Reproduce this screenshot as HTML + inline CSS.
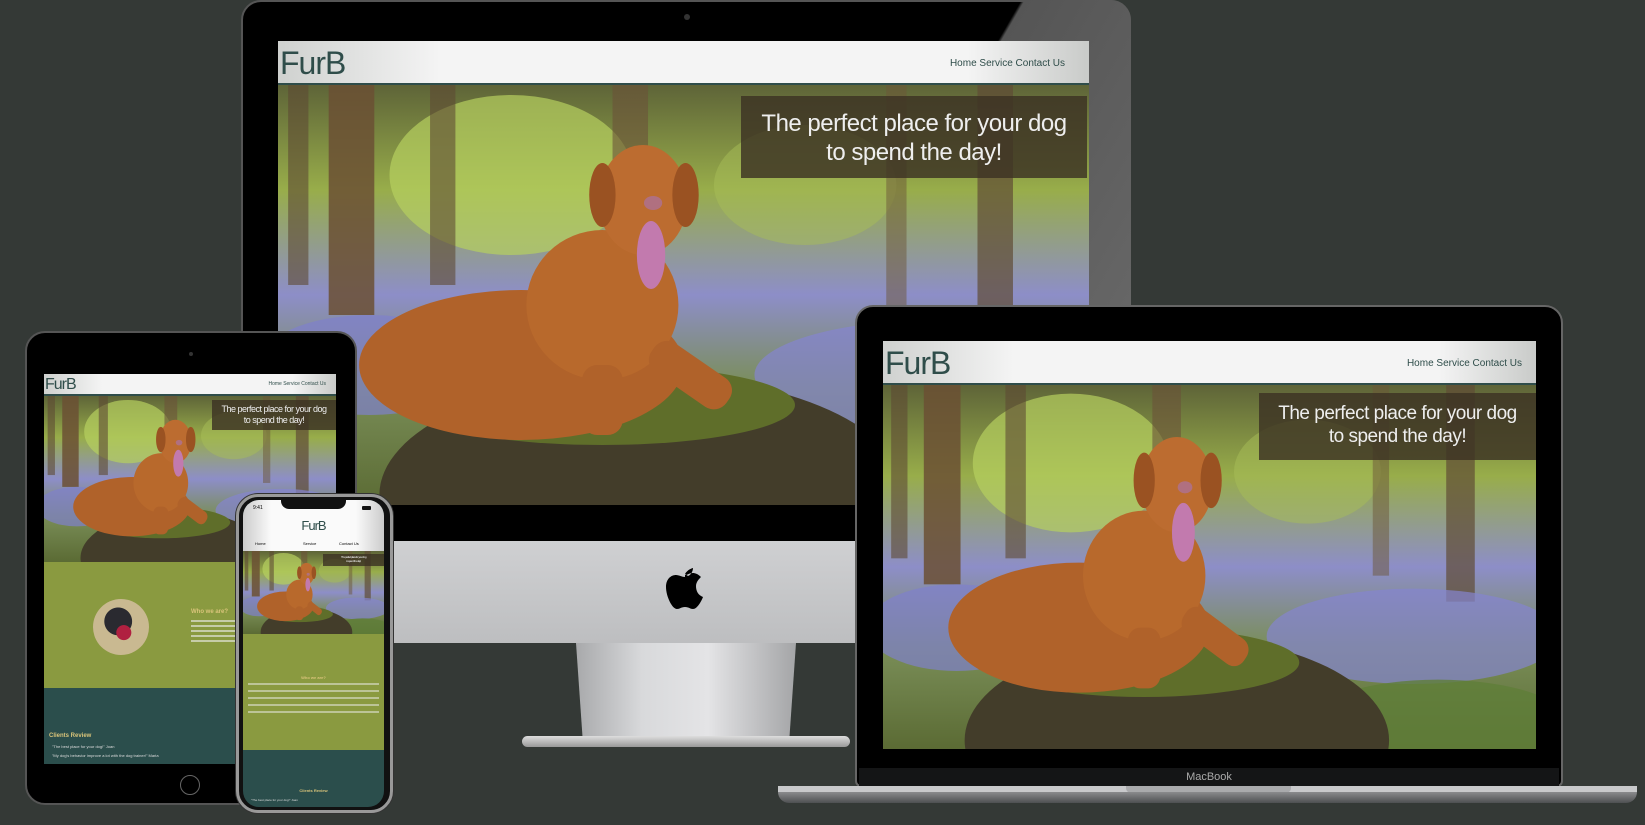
<!DOCTYPE html>
<html><head><meta charset="utf-8"><style>
*{margin:0;padding:0;box-sizing:border-box}
body{width:1645px;height:825px;background:#343936;position:relative;overflow:hidden;font-family:"Liberation Sans",sans-serif}
.a{position:absolute}
.hdr{background:linear-gradient(90deg,#cfd1cf 0%,#f4f4f4 20%,#f4f4f4 85%,#c9cbc9 100%);border-bottom:2px solid #2f4d4a;color:#2f4d4a}
.logo{font-weight:normal;letter-spacing:-1px}
.hero svg{width:100%;height:100%;display:block}
.tbox{background:rgba(60,50,35,.82);color:#eee;text-align:center;line-height:1.2;letter-spacing:-.5px}
</style></head><body>
<svg width="0" height="0" style="position:absolute">
<defs>
<linearGradient id="bg" x1="0" y1="0" x2="0" y2="1">
<stop offset="0" stop-color="#5e6438"/><stop offset=".25" stop-color="#98ad4a"/><stop offset=".5" stop-color="#8d8ec8"/><stop offset=".72" stop-color="#7a8e58"/><stop offset="1" stop-color="#5b6b34"/></linearGradient>
<symbol id="hero" viewBox="0 0 800 420" preserveAspectRatio="none">
<rect width="800" height="420" fill="url(#bg)"/>
<ellipse cx="230" cy="90" rx="120" ry="80" fill="#b7d060" opacity=".7"/>
<ellipse cx="520" cy="100" rx="90" ry="60" fill="#a8be58" opacity=".5"/>
<rect x="50" y="0" width="45" height="230" fill="#6b5034" opacity=".85"/>
<rect x="10" y="0" width="20" height="200" fill="#5e4a33" opacity=".6"/>
<rect x="150" y="0" width="25" height="200" fill="#5e4a33" opacity=".6"/>
<rect x="330" y="0" width="35" height="190" fill="#6a5238" opacity=".6"/>
<rect x="690" y="0" width="35" height="250" fill="#5f4b35" opacity=".7"/>
<rect x="600" y="0" width="20" height="220" fill="#6b5638" opacity=".5"/>
<ellipse cx="650" cy="290" rx="180" ry="55" fill="#8585d0" opacity=".7"/>
<ellipse cx="90" cy="280" rx="110" ry="50" fill="#7f80cc" opacity=".7"/>
<ellipse cx="680" cy="390" rx="160" ry="50" fill="#5f7e38" opacity=".8"/>
<ellipse cx="360" cy="410" rx="260" ry="120" fill="#433d2a"/>
<ellipse cx="320" cy="320" rx="190" ry="40" fill="#5f6e2a"/>
<ellipse cx="240" cy="280" rx="160" ry="75" fill="#b0622a"/>
<ellipse cx="320" cy="220" rx="75" ry="75" fill="#b8692c"/>
<rect x="300" y="280" width="40" height="70" rx="15" fill="#b0622a"/>
<rect x="380" y="250" width="90" height="35" rx="15" transform="rotate(35 380 250)" fill="#b0622a"/>
<ellipse cx="360" cy="115" rx="44" ry="55" fill="#bc6c30"/>
<ellipse cx="320" cy="110" rx="13" ry="32" fill="#9a5222"/>
<ellipse cx="402" cy="110" rx="13" ry="32" fill="#9a5222"/>
<ellipse cx="368" cy="170" rx="14" ry="34" fill="#c27aae"/>
<ellipse cx="370" cy="118" rx="9" ry="7" fill="#b07080"/>
</symbol>
</defs></svg>

<!-- iMac -->
<div class="a" style="left:241px;top:0;width:890px;height:545px;background:#000;border-radius:20px 20px 0 0;border:2px solid #555"></div>
<div class="a" style="left:950px;top:0;width:181px;height:305px;background:linear-gradient(120deg,transparent 20%,#555 21%,#666 100%);border-radius:0 20px 0 0"></div>
<div class="a" style="left:684px;top:14px;width:6px;height:6px;border-radius:50%;background:#333"></div>
<div class="a" style="left:241px;top:541px;width:890px;height:102px;background:linear-gradient(#cfd0d2,#bdbec0);"></div>
<svg class="a" style="left:664px;top:562px" width="42" height="50" viewBox="0 0 42 50"><path d="M21 12c3-5 8-6 8-6s0 6-5 8zM21 15c-3 0-6-2-9-2-5 0-10 4-10 12 0 9 6 22 11 22 3 0 4-2 8-2s5 2 8 2c4 0 8-7 10-12-5-2-7-6-7-11 0-4 3-7 5-9-3-3-6-4-8-4-4 0-5 2-8 2z" fill="#000"/></svg>
<div class="a" style="left:576px;top:643px;width:220px;height:95px;background:linear-gradient(90deg,#a8a9ab,#d8d9db 30%,#e4e4e6 60%,#a4a5a7);clip-path:polygon(0 0,100% 0,97% 100%,3% 100%)"></div>
<div class="a" style="left:522px;top:736px;width:328px;height:11px;background:linear-gradient(#ddd,#999);border-radius:6px"></div>
<div class="a hdr" style="left:278px;top:41px;width:811px;height:44px">
<div class="a logo" style="left:2px;top:4px;font-size:32px">FurB</div>
<div class="a" style="right:24px;top:17px;font-size:10px">Home Service Contact Us</div></div>
<div class="a hero" style="left:278px;top:85px;width:811px;height:420px"><svg><use href="#hero"/></svg></div>
<div class="a tbox" style="left:741px;top:96px;width:346px;height:82px;font-size:24px;padding-top:14px">The perfect place for your dog<br>to spend the day!</div>

<!-- Laptop -->
<div class="a" style="left:855px;top:305px;width:708px;height:482px;background:#000;border-radius:18px 18px 6px 6px;border:2px solid #666"></div>
<div class="a" style="left:859px;top:768px;width:700px;height:18px;background:#141516;color:#aaa;font-size:11px;text-align:center;line-height:18px">MacBook</div>
<div class="a" style="left:778px;top:786px;width:859px;height:6px;background:#c8c9cb"></div>
<div class="a" style="left:1126px;top:786px;width:165px;height:7px;background:#a9aaac;border-radius:0 0 5px 5px"></div>
<div class="a" style="left:778px;top:792px;width:859px;height:11px;background:linear-gradient(#8a8b8d,#4e5052);border-radius:0 0 40px 40px"></div>
<div class="a hdr" style="left:883px;top:341px;width:653px;height:44px">
<div class="a logo" style="left:2px;top:4px;font-size:32px">FurB</div>
<div class="a" style="right:14px;top:17px;font-size:10px">Home Service Contact Us</div></div>
<div class="a hero" style="left:883px;top:385px;width:653px;height:364px"><svg><use href="#hero"/></svg></div>
<div class="a tbox" style="left:1259px;top:393px;width:277px;height:67px;font-size:19px;padding-top:10px">The perfect place for your dog<br>to spend the day!</div>

<!-- Tablet -->
<div class="a" style="left:25px;top:331px;width:332px;height:474px;background:#000;border-radius:20px;border:2px solid #555"></div>
<div class="a" style="left:189px;top:352px;width:4px;height:4px;border-radius:50%;background:#333"></div>
<div class="a" style="left:180px;top:775px;width:20px;height:20px;border-radius:50%;border:1px solid #666"></div>
<div class="a hdr" style="left:44px;top:374px;width:292px;height:22px">
<div class="a logo" style="left:1px;top:2px;font-size:16px">FurB</div>
<div class="a" style="right:10px;top:7px;font-size:5px">Home Service Contact Us</div></div>
<div class="a hero" style="left:44px;top:396px;width:292px;height:166px"><svg><use href="#hero"/></svg></div>
<div class="a tbox" style="left:212px;top:400px;width:124px;height:30px;font-size:9px;padding-top:4px">The perfect place for your dog<br>to spend the day!</div>
<div class="a" style="left:44px;top:562px;width:292px;height:126px;background:#8a9a40"></div>
<div class="a" style="left:93px;top:599px;width:56px;height:56px;border-radius:50%;background:radial-gradient(circle at 55% 60%,#b02040 0 16%,transparent 17%),radial-gradient(circle at 45% 40%,#2a2a30 0 30%,#c9b991 31%)"></div>
<div class="a" style="left:191px;top:609px;font-size:6px;color:#d9c47a;font-weight:bold">Who we are?</div>
<div class="a" style="left:191px;top:620px;width:45px;height:24px;background:repeating-linear-gradient(#eee 0 2px,transparent 2px 5px);opacity:.6"></div>
<div class="a" style="left:44px;top:688px;width:292px;height:76px;background:#2b4e4c"></div>
<div class="a" style="left:49px;top:733px;font-size:6px;color:#d9c47a;font-weight:bold">Clients Review</div>
<div class="a" style="left:52px;top:744px;font-size:4px;color:#ddd">"The best place for your dog!" Joan</div>
<div class="a" style="left:52px;top:753px;font-size:4px;color:#ddd">"My dog's behavior improve a lot with the dog trainer!" Maria</div>

<!-- Phone -->
<div class="a" style="left:236px;top:494px;width:157px;height:319px;background:#111;border-radius:22px;border:3px solid #999;box-shadow:0 0 0 1px #333"></div>
<div class="a" style="left:243px;top:500px;width:141px;height:307px;background:#2b4e4c;border-radius:16px;overflow:hidden">
<div class="a" style="left:0;top:0;width:141px;height:51px;background:linear-gradient(90deg,#ccc,#fafafa 20%,#fafafa 80%,#ccc)"></div>
<div class="a" style="left:38px;top:0;width:65px;height:9px;background:#111;border-radius:0 0 8px 8px"></div>
<div class="a" style="left:10px;top:5px;font-size:5px">9:41</div>
<div class="a" style="left:119px;top:6px;width:9px;height:4px;background:#111;border-radius:1px"></div>
<div class="a logo" style="left:0;width:141px;top:18px;text-align:center;font-size:13px;color:#2f4d4a">FurB</div>
<div class="a" style="left:12px;top:41px;font-size:4px">Home</div>
<div class="a" style="left:60px;top:41px;font-size:4px">Service</div>
<div class="a" style="left:96px;top:41px;font-size:4px">Contact Us</div>
<div class="a hero" style="left:0;top:51px;width:141px;height:83px"><svg><use href="#hero"/></svg></div>
<div class="a tbox" style="left:80px;top:54px;width:61px;height:12px;font-size:3px;padding-top:2px">The perfect place for your dog<br>to spend the day!</div>
<div class="a" style="left:0;top:134px;width:141px;height:116px;background:#8a9a40"></div>
<div class="a" style="left:0;width:141px;top:175px;text-align:center;font-size:4px;color:#d9c47a;font-weight:bold">Who we are?</div>
<div class="a" style="left:5px;top:183px;width:131px;height:30px;background:repeating-linear-gradient(#eee 0 2px,transparent 2px 7px);opacity:.5"></div>
<div class="a" style="left:0;width:141px;top:288px;text-align:center;font-size:4px;color:#d9c47a;font-weight:bold">Clients Review</div>
<div class="a" style="left:8px;top:298px;font-size:3px;color:#ddd">"The best place for your dog!" Joan</div>
</div>
</body></html>
